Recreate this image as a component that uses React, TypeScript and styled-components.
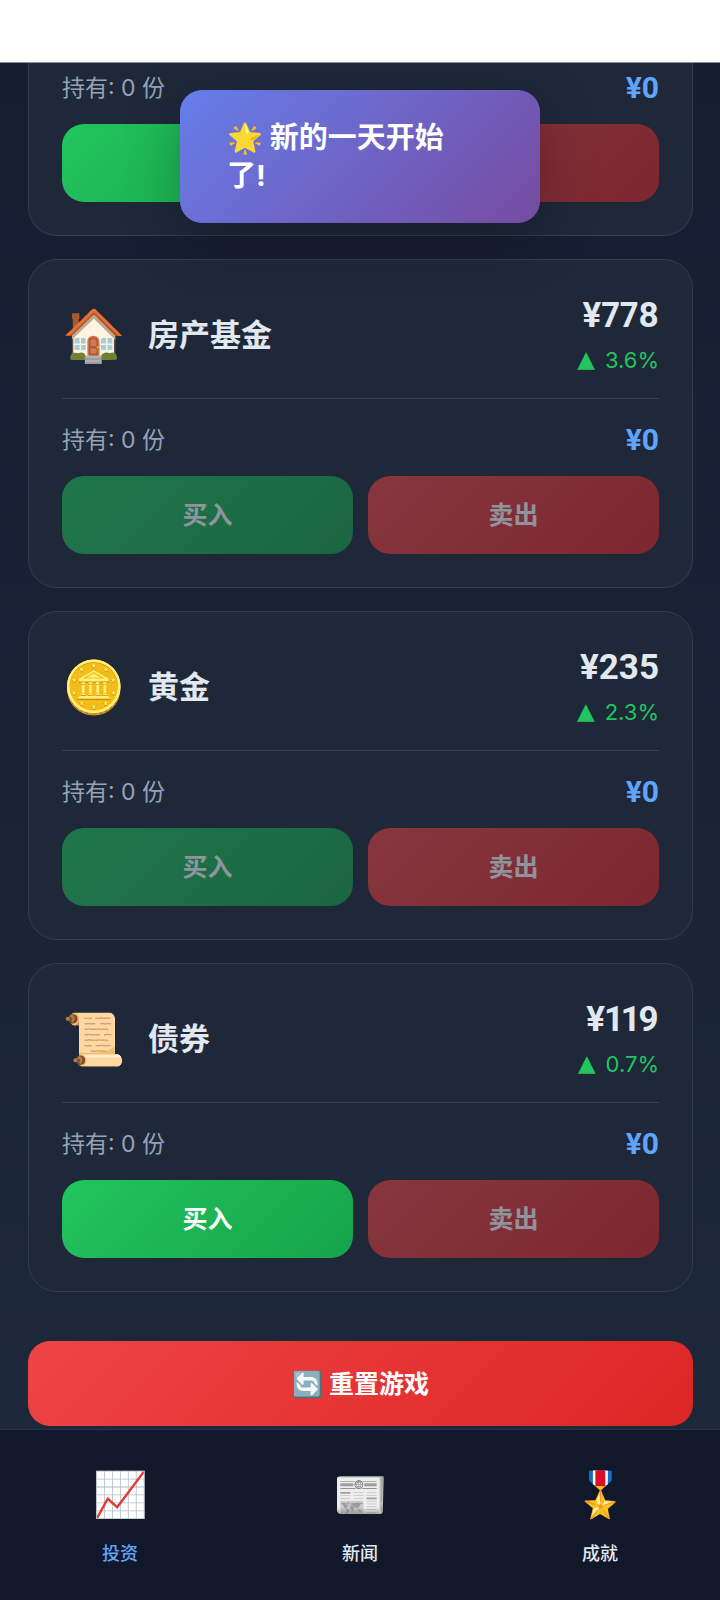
import React from "react";
import styled, { createGlobalStyle } from "styled-components";

const GlobalStyle = createGlobalStyle`
  * { box-sizing: border-box; }
  body {
    margin: 0;
    color: #e2e8f0;
    font-family: Inter, "Noto Sans CJK SC", sans-serif;
    font-size: 23px;
    line-height: 32px;
  }
  button { font: inherit; border: 0; cursor: pointer; }
  p, h2 { margin: 0; }
`;

const Page = styled.div`
  position: relative;
  display: flex;
  flex-direction: column;
  min-height: 100vh;
  background: linear-gradient(180deg, #151d31 0%, #1e293b 100%);
`;

const StatusBar = styled.header`
  position: relative;
  z-index: 2;
  height: 63px;
  background: #fff;
  border-bottom: 1px solid #8a8e96;
`;

const Content = styled.main`
  flex: 1;
  display: flex;
  flex-direction: column;
  gap: 23px;
  padding: 0 27px 3px 28px;
`;

const Card = styled.article<{ $continued?: boolean }>`
  padding: ${(p) => (p.$continued ? "9px 33px 33px" : "33px")};
  background: #1e2839;
  border: 1px solid #303d4e;
  border-top-width: ${(p) => (p.$continued ? "0" : "1px")};
  border-radius: ${(p) => (p.$continued ? "0 0 29px 29px" : "29px")};
`;

const CardHead = styled.div`
  display: flex;
  align-items: center;
  gap: 22px;
  padding-bottom: 21px;
  margin-bottom: 25px;
  border-bottom: 1px solid #364252;
`;

const AssetIcon = styled.span`
  width: 64px;
  font-size: 51px;
  line-height: 64px;
`;

const AssetName = styled.h2`
  flex: 1;
  font-size: 31px;
  font-weight: 700;
  line-height: 40px;
`;

const Quote = styled.div`
  display: flex;
  flex-direction: column;
  gap: 5px;
  text-align: right;
`;

const Price = styled.strong`
  font-family: Roboto, sans-serif;
  font-size: 35px;
  font-weight: 700;
  font-variant-numeric: proportional-nums;
  line-height: 46px;
`;

const Change = styled.span`
  display: flex;
  justify-content: flex-end;
  gap: 10px;
  font-size: 22px;
  line-height: 33px;
  color: #22c55e;
`;

const Arrow = styled.span`
  font-family: "DejaVu Sans", sans-serif;
  font-size: 23px;
  line-height: 30px;
`;

const Holding = styled.div`
  display: flex;
  align-items: center;
  justify-content: space-between;
  margin-bottom: 20px;
  color: #94a3b8;
`;

const Value = styled.strong`
  font-family: Roboto, sans-serif;
  font-size: 30px;
  font-weight: 700;
  color: #60a5fa;
`;

const Actions = styled.div`
  display: grid;
  grid-template-columns: 1fr 1fr;
  gap: 15px;
`;

const TradeButton = styled.button<{ $kind: "buy" | "sell" }>`
  height: 78px;
  border-radius: 22px;
  color: #fff;
  font-size: 25px;
  font-weight: 700;
  background: ${(p) =>
    p.$kind === "buy"
      ? "linear-gradient(135deg, #22c55e, #16a34a)"
      : "linear-gradient(135deg, #ef4444, #dc2626)"};
  &:disabled { opacity: 0.5; cursor: default; }
`;

const ResetButton = styled.button`
  height: 85px;
  margin-top: 26px;
  border-radius: 22px;
  color: #fff;
  font-size: 25px;
  font-weight: 700;
  background: linear-gradient(135deg, #ef4444, #dc2626);
`;

const TabBar = styled.nav`
  display: grid;
  grid-template-columns: repeat(3, 1fr);
  height: 171px;
  background: #11182a;
  border-top: 1px solid #27344a;
`;

const Tab = styled.button<{ $active?: boolean }>`
  display: flex;
  flex-direction: column;
  align-items: center;
  gap: 18px;
  padding: 36px 0 0;
  background: none;
  color: ${(p) => (p.$active ? "#60a5fa" : "#e2e8f0")};
  font-size: 18px;
  font-weight: 500;
  line-height: 28px;
`;

const TabIcon = styled.span`
  font-size: 44px;
  line-height: 56px;
`;

const Toast = styled.div`
  position: absolute;
  z-index: 1;
  top: 90px;
  left: 25%;
  width: 50%;
  padding: 29px 68px 28px 47px;
  border-radius: 22px;
  background: linear-gradient(135deg, #667eea, #764ba2);
  box-shadow: 0 15px 55px rgba(0, 0, 0, 0.25);
  color: #fff;
  font-size: 29px;
  font-weight: 700;
  line-height: 38px;
`;

type Asset = { icon: string; name: string; price: number; change: string; canBuy: boolean };

const assets: Asset[] = [
  { icon: "🏠", name: "房产基金", price: 778, change: "3.6%", canBuy: false },
  { icon: "🪙", name: "黄金", price: 235, change: "2.3%", canBuy: false },
  { icon: "📜", name: "债券", price: 119, change: "0.7%", canBuy: true },
];

function HoldingRow() {
  return (
    <Holding>
      <span>持有: 0 份</span>
      <Value>¥0</Value>
    </Holding>
  );
}

export default function App() {
  return (
    <Page>
      <GlobalStyle />
      <StatusBar />
      <Content>
        <Card $continued>
          <HoldingRow />
          <Actions>
            <TradeButton $kind="buy" aria-label="买入" />
            <TradeButton $kind="sell" aria-label="卖出" disabled />
          </Actions>
        </Card>
        {assets.map((a) => (
          <Card key={a.name}>
            <CardHead>
              <AssetIcon>{a.icon}</AssetIcon>
              <AssetName>{a.name}</AssetName>
              <Quote>
                <Price>¥{a.price}</Price>
                <Change>
                  <Arrow>▲</Arrow>
                  {a.change}
                </Change>
              </Quote>
            </CardHead>
            <HoldingRow />
            <Actions>
              <TradeButton $kind="buy" disabled={!a.canBuy}>买入</TradeButton>
              <TradeButton $kind="sell" disabled>卖出</TradeButton>
            </Actions>
          </Card>
        ))}
        <ResetButton>🔄 重置游戏</ResetButton>
      </Content>
      <TabBar>
        <Tab $active><TabIcon>📈</TabIcon>投资</Tab>
        <Tab><TabIcon>📰</TabIcon>新闻</Tab>
        <Tab><TabIcon>🎖️</TabIcon>成就</Tab>
      </TabBar>
      <Toast role="status">🌟 新的一天开始了!</Toast>
    </Page>
  );
}
